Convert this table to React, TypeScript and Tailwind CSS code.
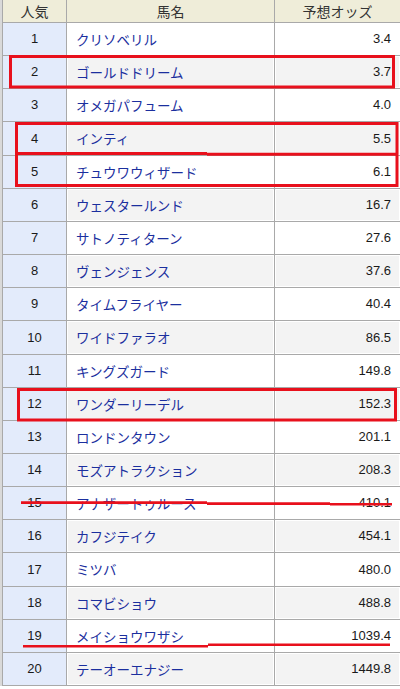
import React from "react";

type Row = { n: number; name: string; odds: string; h: string };

const rows: Row[] = [
  { n: 1, name: "クリソベリル", odds: "3.4", h: "h-[33px]" },
  { n: 2, name: "ゴールドドリーム", odds: "3.7", h: "h-[33px]" },
  { n: 3, name: "オメガパフューム", odds: "4.0", h: "h-[33px]" },
  { n: 4, name: "インティ", odds: "5.5", h: "h-[34px]" },
  { n: 5, name: "チュウワウィザード", odds: "6.1", h: "h-[33px]" },
  { n: 6, name: "ウェスタールンド", odds: "16.7", h: "h-[33px]" },
  { n: 7, name: "サトノティターン", odds: "27.6", h: "h-[33px]" },
  { n: 8, name: "ヴェンジェンス", odds: "37.6", h: "h-[33px]" },
  { n: 9, name: "タイムフライヤー", odds: "40.4", h: "h-[33px]" },
  { n: 10, name: "ワイドファラオ", odds: "86.5", h: "h-[34px]" },
  { n: 11, name: "キングズガード", odds: "149.8", h: "h-[33px]" },
  { n: 12, name: "ワンダーリーデル", odds: "152.3", h: "h-[33px]" },
  { n: 13, name: "ロンドンタウン", odds: "201.1", h: "h-[33px]" },
  { n: 14, name: "モズアトラクション", odds: "208.3", h: "h-[33px]" },
  { n: 15, name: "アナザートゥルース", odds: "410.1", h: "h-[33px]" },
  { n: 16, name: "カフジテイク", odds: "454.1", h: "h-[33px]" },
  { n: 17, name: "ミツバ", odds: "480.0", h: "h-[34px]" },
  { n: 18, name: "コマビショウ", odds: "488.8", h: "h-[33px]" },
  { n: 19, name: "メイショウワザシ", odds: "1039.4", h: "h-[33px]" },
  { n: 20, name: "テーオーエナジー", odds: "1449.8", h: "h-[33px]" },
];

const jp = "font-['Noto_Sans_CJK_JP','Noto_Sans',sans-serif]";
const num = "font-['Liberation_Sans',Arial,sans-serif]";

export default function App() {
  return (
    <div className="relative w-[400px] h-[689px] bg-white overflow-hidden">
      <div className="w-[400px] flex flex-col border-l-2 border-[#d9d9d9]">
        {/* header */}
        <div className="flex h-[23px] border-b border-[#a9a9a9] bg-[#efedd9] text-[14px] text-[#333] border-l border-l-[#a9a9a9]">
          <div className={`w-[64px] shrink-0 border-r border-[#a9a9a9] flex items-center justify-center ${jp}`}>人気</div>
          <div className={`w-[208px] shrink-0 border-r border-[#a9a9a9] flex items-center justify-center ${jp}`}>馬名</div>
          <div className={`flex-1 flex items-center justify-center ${jp}`}>予想オッズ</div>
        </div>
        {rows.map((r) => {
          const even = r.n % 2 === 0;
          const cellBg = even ? "bg-[#f3f3f3] shadow-[inset_0_0_0_1px_#ffffff]" : "bg-white";
          return (
            <div key={r.n} className={`flex ${r.h} border-b border-[#a9a9a9] border-l border-l-[#a9a9a9]`}>
              <div className={`w-[64px] shrink-0 border-r border-[#a9a9a9] bg-[#e3ebfb] flex items-center justify-center text-[13px] text-[#1a1a1a] ${num}`}>
                {r.n}
              </div>
              <div className={`w-[208px] shrink-0 border-r border-[#a9a9a9] ${cellBg} flex items-center pl-[9px] text-[13.5px] text-[#1b2f9e] ${jp}`}>
                {r.name}
              </div>
              <div className={`flex-1 ${cellBg} flex items-center justify-end pr-[9px] text-[13px] text-[#1a1a1a] ${num}`}>
                {r.odds}
              </div>
            </div>
          );
        })}
      </div>

      {/* red hand-drawn annotations */}
      <svg
        className="absolute left-0 top-0 pointer-events-none"
        width="400"
        height="689"
        viewBox="0 0 400 689"
      >
        <g fill="none" stroke="#e8101c" strokeWidth="3">
          <rect x="10.5" y="56.5" width="383" height="30.5" />
          <rect x="16.5" y="123.5" width="380.5" height="62" />
          <line x1="15" y1="153.5" x2="207" y2="153.5" />
          <line x1="207" y1="154.3" x2="398" y2="154.3" />
          <rect x="18.5" y="389.5" width="377" height="30.5" />
        </g>
        <g fill="none" stroke="#e8101c" strokeWidth="2.6">
          <line x1="21" y1="502.6" x2="207" y2="502.6" />
          <line x1="207" y1="503.6" x2="330" y2="503.6" />
          <line x1="330" y1="504.3" x2="392" y2="504.3" />
          <line x1="23" y1="646.2" x2="208" y2="646.2" />
          <line x1="208" y1="644.8" x2="390" y2="644.8" />
        </g>
      </svg>
    </div>
  );
}
